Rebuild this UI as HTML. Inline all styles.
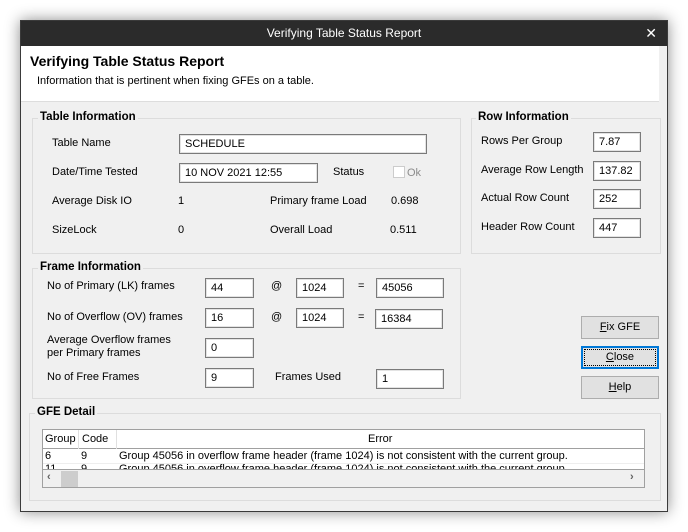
<!DOCTYPE html>
<html><head><meta charset="utf-8"><style>
*{box-sizing:border-box;margin:0;padding:0}
body{width:688px;height:532px;background:#fff;font-family:"Liberation Sans",sans-serif;font-size:11px;color:#000;position:relative;overflow:hidden}
.win{position:absolute;left:20px;top:20px;width:648px;height:492px;background:#f0f0f0;border:1px solid #3a3a3a;box-shadow:0 0 14px rgba(0,0,0,.45)}
.title{position:absolute;left:0;top:0;width:646px;height:25px;background:#2b2b2b;color:#fff;font-size:12px;text-align:center;line-height:25px}
.x{position:absolute;right:10px;top:0;line-height:25px;font-size:14px;color:#fff}
.hdr{position:absolute;left:0;top:25px;width:638px;height:56px;background:#fff;border-bottom:1px solid #ddd}
.a{position:absolute;white-space:nowrap}
.gb{position:absolute;border:1px solid #dcdcdc}
.lg{position:absolute;font-weight:bold;font-size:11.5px;background:#f0f0f0;padding:0 2px;white-space:nowrap}
.in{position:absolute;background:#fff;border:1px solid #7a7a7a;box-shadow:inset 1px 1px 0 #fff,inset -1px -1px 0 #fff;outline:1px solid #e3e3e3;outline-offset:-2px;padding-left:5px;line-height:18px;white-space:nowrap}
.btn{position:absolute;left:560px;width:78px;height:23px;background:#e1e1e1;border:1px solid #adadad;text-align:center;line-height:21px}
</style></head><body>
<div class="win">
<div class="title">Verifying Table Status Report</div><div class="x">✕</div>
<div class="hdr"></div>
<div class="a" style="left:9px;top:32px;font-size:14px;font-weight:bold">Verifying Table Status Report</div>
<div class="a" style="left:16px;top:54px">Information that is pertinent when fixing GFEs on a table.</div>

<div class="gb" style="left:11px;top:97px;width:429px;height:136px"></div>
<div class="lg" style="left:17px;top:90px">Table Information</div>
<div class="a" style="left:31px;top:116px">Table Name</div>
<div class="in" style="left:158px;top:113px;width:248px;height:20px">SCHEDULE</div>
<div class="a" style="left:31px;top:145px">Date/Time Tested</div>
<div class="in" style="left:158px;top:142px;width:139px;height:20px">10 NOV 2021 12:55</div>
<div class="a" style="left:312px;top:145px">Status</div>
<div class="a" style="left:372px;top:145px;width:12px;height:12px;border:1px solid #ccc;background:#fff"></div>
<div class="a" style="left:386px;top:146px;color:#8c8c8c">Ok</div>
<div class="a" style="left:31px;top:174px">Average Disk IO</div>
<div class="a" style="left:157px;top:174px">1</div>
<div class="a" style="left:249px;top:174px">Primary frame Load</div>
<div class="a" style="left:370px;top:174px">0.698</div>
<div class="a" style="left:31px;top:203px">SizeLock</div>
<div class="a" style="left:157px;top:203px">0</div>
<div class="a" style="left:249px;top:203px">Overall Load</div>
<div class="a" style="left:369px;top:203px">0.511</div>

<div class="gb" style="left:450px;top:97px;width:190px;height:136px"></div>
<div class="lg" style="left:455px;top:90px">Row Information</div>
<div class="a" style="left:460px;top:114px">Rows Per Group</div>
<div class="in" style="left:572px;top:111px;width:48px;height:20px">7.87</div>
<div class="a" style="left:460px;top:143px">Average Row Length</div>
<div class="in" style="left:572px;top:140px;width:48px;height:20px">137.82</div>
<div class="a" style="left:460px;top:171px">Actual Row Count</div>
<div class="in" style="left:572px;top:168px;width:48px;height:20px">252</div>
<div class="a" style="left:460px;top:200px">Header Row Count</div>
<div class="in" style="left:572px;top:197px;width:48px;height:20px">447</div>

<div class="gb" style="left:11px;top:247px;width:429px;height:131px"></div>
<div class="lg" style="left:17px;top:240px">Frame Information</div>
<div class="a" style="left:26px;top:259px">No of Primary (LK) frames</div>
<div class="in" style="left:184px;top:257px;width:49px;height:20px">44</div>
<div class="a" style="left:250px;top:259px">@</div>
<div class="in" style="left:275px;top:257px;width:48px;height:20px">1024</div>
<div class="a" style="left:337px;top:259px">=</div>
<div class="in" style="left:355px;top:257px;width:68px;height:20px">45056</div>
<div class="a" style="left:26px;top:290px">No of Overflow (OV) frames</div>
<div class="in" style="left:184px;top:287px;width:49px;height:20px">16</div>
<div class="a" style="left:250px;top:290px">@</div>
<div class="in" style="left:275px;top:287px;width:48px;height:20px">1024</div>
<div class="a" style="left:337px;top:290px">=</div>
<div class="in" style="left:354px;top:288px;width:68px;height:20px">16384</div>
<div class="a" style="left:26px;top:313px;line-height:13px">Average Overflow frames<br>per Primary frames</div>
<div class="in" style="left:184px;top:317px;width:49px;height:20px">0</div>
<div class="a" style="left:26px;top:350px">No of Free Frames</div>
<div class="in" style="left:184px;top:347px;width:49px;height:20px">9</div>
<div class="a" style="left:254px;top:350px">Frames Used</div>
<div class="in" style="left:355px;top:348px;width:68px;height:20px">1</div>

<div class="btn" style="top:295px"><u>F</u>ix GFE</div>
<div class="btn" style="top:325px;border:2px solid #0078d7;line-height:19px"><span style="display:block;margin:1px;border:1px dotted #000;line-height:15px"><u>C</u>lose</span></div>
<div class="btn" style="top:355px"><u>H</u>elp</div>

<div class="gb" style="left:8px;top:392px;width:632px;height:88px"></div>
<div class="lg" style="left:14px;top:385px">GFE Detail</div>
<div class="a" style="left:21px;top:408px;width:603px;height:59px;border:1px solid #a0a0a0;background:#fff;overflow:hidden">
 <div class="a" style="left:0;top:0;width:601px;height:19px;border-bottom:1px solid #a0a0a0;background:#fff"></div>
 <div class="a" style="left:2px;top:3px">Group</div>
 <div class="a" style="left:35px;top:0;height:19px;border-left:1px solid #e0e0e0"></div>
 <div class="a" style="left:39px;top:3px">Code</div>
 <div class="a" style="left:73px;top:0;height:19px;border-left:1px solid #e0e0e0"></div>
 <div class="a" style="left:325px;top:3px">Error</div>
 <div class="a" style="left:2px;top:20px">6</div><div class="a" style="left:38px;top:20px">9</div>
 <div class="a" style="left:76px;top:20px">Group 45056 in overflow frame header (frame 1024) is not consistent with the current group.</div>
 <div class="a" style="left:0;top:33px;width:601px;border-top:1px solid #eee"></div>
 <div class="a" style="left:2px;top:33px">11</div><div class="a" style="left:38px;top:33px">9</div>
 <div class="a" style="left:76px;top:33px">Group 45056 in overflow frame header (frame 1024) is not consistent with the current group.</div>
 <div class="a" style="left:0;top:39px;width:601px;height:19px;background:#f0f0f0;border-top:1px solid #a0a0a0"></div>
 <div class="a" style="left:18px;top:41px;width:17px;height:16px;background:#cdcdcd"></div>
 <div class="a" style="left:4px;top:41px;color:#606060;font-weight:bold">‹</div>
 <div class="a" style="left:587px;top:41px;color:#606060;font-weight:bold">›</div>
</div>
</div>
</body></html>
